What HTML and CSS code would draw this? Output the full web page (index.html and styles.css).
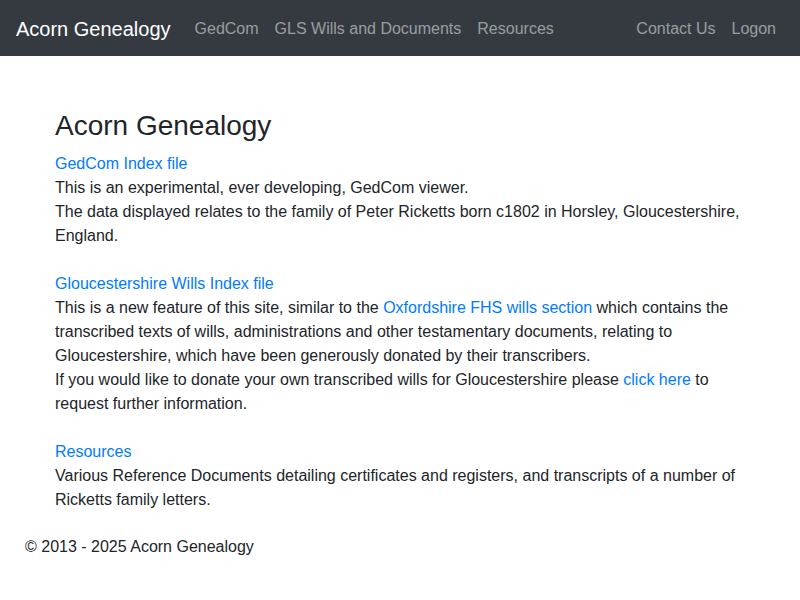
FILE: index.html
```html
<!DOCTYPE html>
<html lang="en">
<head>
<meta charset="utf-8">
<title>Acorn Genealogy</title>
<link rel="stylesheet" href="styles.css">
</head>
<body>
<nav class="navbar">
  <a class="brand" href="#">Acorn Genealogy</a>
  <ul class="nav">
    <li><a href="#">GedCom</a></li>
    <li><a href="#">GLS Wills and Documents</a></li>
    <li><a href="#">Resources</a></li>
  </ul>
  <ul class="nav nav-right">
    <li><a href="#">Contact Us</a></li>
    <li><a href="#">Logon</a></li>
  </ul>
</nav>
<main class="container">
  <h1 class="title">Acorn Genealogy</h1>
  <section class="block">
    <a href="#">GedCom Index file</a><br>
    This is an experimental, ever developing, GedCom viewer.<br>
    The data displayed relates to the family of Peter Ricketts born c1802 in Horsley, Gloucestershire, England.
  </section>
  <section class="block">
    <a href="#">Gloucestershire Wills Index file</a><br>
    This is a new feature of this site, similar to the <a href="#">Oxfordshire FHS wills section</a> which contains the transcribed texts of wills, administrations and other testamentary documents, relating to Gloucestershire, which have been generously donated by their transcribers.<br>
    If you would like to donate your own transcribed wills for Gloucestershire please <a href="#">click here</a> to request further information.
  </section>
  <section class="block">
    <a href="#">Resources</a><br>
    Various Reference Documents detailing certificates and registers, and transcripts of a number of Ricketts family letters.
  </section>
</main>
<footer class="footer">&copy; 2013 - 2025 Acorn Genealogy</footer>
</body>
</html>
```

FILE: styles.css
```css
* { box-sizing: border-box; }
html, body { margin: 0; padding: 0; }
body {
  font-family: "Liberation Sans", Arial, sans-serif;
  font-size: 16px;
  line-height: 1.5;
  color: #212529;
  background: #fff;
}
a { color: #007bff; text-decoration: none; }

.navbar {
  display: flex;
  align-items: center;
  background: #343a40;
  padding: 9px 16px 7px;
  height: 56px;
}
.brand {
  color: #fff;
  font-size: 20px;
  line-height: 30px;
  padding: 5px 0;
  margin-right: 16px;
}
.nav {
  display: flex;
  list-style: none;
  margin: 0;
  padding: 0;
}
.nav a {
  display: block;
  padding: 8px;
  color: rgba(255,255,255,.5);
}
.nav-right { margin-left: auto; }

.container {
  width: 720px;
  margin: 0 auto;
  padding: 53px 15px 0;
}
.title {
  font-size: 28px;
  font-weight: 500;
  line-height: 1.2;
  margin: 0 0 9px;
}
.block { margin-bottom: 24px; }
.block:last-child { margin-bottom: 0; }

.footer {
  padding: 23px 25px 0;
}
```
